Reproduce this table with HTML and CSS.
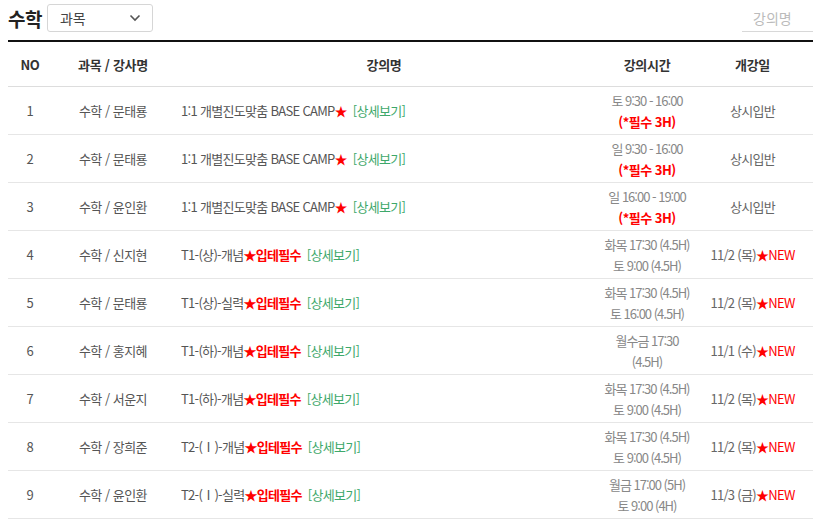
FILE: index.html
```html
<!DOCTYPE html>
<html lang="ko">
<head>
<meta charset="utf-8">
<link rel="stylesheet" href="styles.css">
</head>
<body>
<div class="wrap">
  <div class="top">
    <div class="top-left">
      <h2 class="title">수학</h2>
      <div class="select"><span>과목</span>
        <svg class="chev" width="12" height="8" viewBox="0 0 12 8"><path d="M1.5 1.5 L6 6 L10.5 1.5" fill="none" stroke="#555" stroke-width="1.6"/></svg>
      </div>
    </div>
    <div class="search">강의명</div>
  </div>
  <table class="list">
    <colgroup>
      <col class="c1"><col class="c2"><col class="c3"><col class="c4"><col class="c5">
    </colgroup>
    <thead>
      <tr><th>NO</th><th>과목 / 강사명</th><th>강의명</th><th>강의시간</th><th class="open">개강일</th></tr>
    </thead>
    <tbody>
      <tr><td>1</td><td class="subj">수학 / 문태룡</td><td class="name">1:1 개별진도맞춤 BASE CAMP<span class="red">★</span> <span class="more">[상세보기]</span></td><td class="time">토 9:30 - 16:00<br><b class="red">(*필수 3H)</b></td><td class="open">상시입반</td></tr>
      <tr><td>2</td><td class="subj">수학 / 문태룡</td><td class="name">1:1 개별진도맞춤 BASE CAMP<span class="red">★</span> <span class="more">[상세보기]</span></td><td class="time">일 9:30 - 16:00<br><b class="red">(*필수 3H)</b></td><td class="open">상시입반</td></tr>
      <tr><td>3</td><td class="subj">수학 / 윤인환</td><td class="name">1:1 개별진도맞춤 BASE CAMP<span class="red">★</span> <span class="more">[상세보기]</span></td><td class="time">일 16:00 - 19:00<br><b class="red">(*필수 3H)</b></td><td class="open">상시입반</td></tr>
      <tr><td>4</td><td class="subj">수학 / 신지현</td><td class="name">T1-(상)-개념<b class="red">★입테필수</b> <span class="more">[상세보기]</span></td><td class="time">화목 17:30 (4.5H)<br>토 9:00 (4.5H)</td><td class="open">11/2 (목)<span class="red">★NEW</span></td></tr>
      <tr><td>5</td><td class="subj">수학 / 문태룡</td><td class="name">T1-(상)-실력<b class="red">★입테필수</b> <span class="more">[상세보기]</span></td><td class="time">화목 17:30 (4.5H)<br>토 16:00 (4.5H)</td><td class="open">11/2 (목)<span class="red">★NEW</span></td></tr>
      <tr><td>6</td><td class="subj">수학 / 홍지혜</td><td class="name">T1-(하)-개념<b class="red">★입테필수</b> <span class="more">[상세보기]</span></td><td class="time">월수금 17:30<br>(4.5H)</td><td class="open">11/1 (수)<span class="red">★NEW</span></td></tr>
      <tr><td>7</td><td class="subj">수학 / 서운지</td><td class="name">T1-(하)-개념<b class="red">★입테필수</b> <span class="more">[상세보기]</span></td><td class="time">화목 17:30 (4.5H)<br>토 9:00 (4.5H)</td><td class="open">11/2 (목)<span class="red">★NEW</span></td></tr>
      <tr><td>8</td><td class="subj">수학 / 장희준</td><td class="name">T2-(Ⅰ)-개념<b class="red">★입테필수</b> <span class="more">[상세보기]</span></td><td class="time">화목 17:30 (4.5H)<br>토 9:00 (4.5H)</td><td class="open">11/2 (목)<span class="red">★NEW</span></td></tr>
      <tr><td>9</td><td class="subj">수학 / 윤인환</td><td class="name">T2-(Ⅰ)-실력<b class="red">★입테필수</b> <span class="more">[상세보기]</span></td><td class="time">월금 17:00 (5H)<br>토 9:00 (4H)</td><td class="open">11/3 (금)<span class="red">★NEW</span></td></tr>
    </tbody>
  </table>
</div>
</body>
</html>
```

FILE: styles.css
```css
html, body {
  margin: 0;
  padding: 0;
  background: #fff;
}
body {
  font-family: "Noto Sans CJK KR", "Noto Sans", sans-serif;
  color: #555;
  font-size: 13px;
}
.wrap {
  padding-left: 8px;
}
.top {
  display: flex;
  justify-content: space-between;
  align-items: flex-start;
  height: 40px;
}
.top-left {
  display: flex;
  align-items: center;
  gap: 5px;
  padding-top: 4px;
}
.title {
  margin: 0;
  font-size: 19px;
  font-weight: 700;
  color: #222;
  line-height: 27px;
  letter-spacing: -0.5px;
}
.select {
  box-sizing: border-box;
  width: 106px;
  height: 28px;
  border: 1px solid #d6d6d6;
  border-radius: 3px;
  display: flex;
  align-items: center;
  justify-content: space-between;
  padding: 0 11px 0 12px;
  font-size: 14px;
  color: #444;
}
.chev {
  display: block;
}
.search {
  box-sizing: border-box;
  width: 71px;
  margin-top: 8px;
  height: 24px;
  border-bottom: 1px solid #d8d8d8;
  color: #bbb;
  font-size: 14px;
  text-align: left;
  padding-left: 11px;
  line-height: 20px;
}
.list {
  width: 805px;
  border-collapse: collapse;
  table-layout: fixed;
  border-top: 2px solid #111;
}
.c1 { width: 44px; }
.c2 { width: 122px; }
.c3 { width: 420px; }
.c4 { width: 106px; }
.c5 { width: 113px; }
th {
  height: 44px;
  font-weight: 700;
  color: #333;
  font-size: 13px;
  border-bottom: 1px solid #ddd;
  padding: 0;
  letter-spacing: -0.3px;
}
td {
  height: 47px;
  padding: 0;
  text-align: center;
  border-bottom: 1px solid #e6e6e6;
  font-size: 13px;
  color: #555;
}
td.subj {
  letter-spacing: -0.5px;
  color: #555;
}
th.open, td.open {
  padding-right: 8px;
}
td.open {
  letter-spacing: -0.7px;
  color: #666;
}
td.name {
  text-align: left;
  padding-left: 7px;
  letter-spacing: -0.7px;
}
td.time {
  color: #888;
  letter-spacing: -1px;
  line-height: 21px;
  font-weight: 400;
}
td.time b {
  letter-spacing: -0.5px;
}
.red {
  color: #f00;
}
b.red {
  font-weight: 700;
}
.more {
  color: #3ea86a;
  margin-left: 3px;
}
```
